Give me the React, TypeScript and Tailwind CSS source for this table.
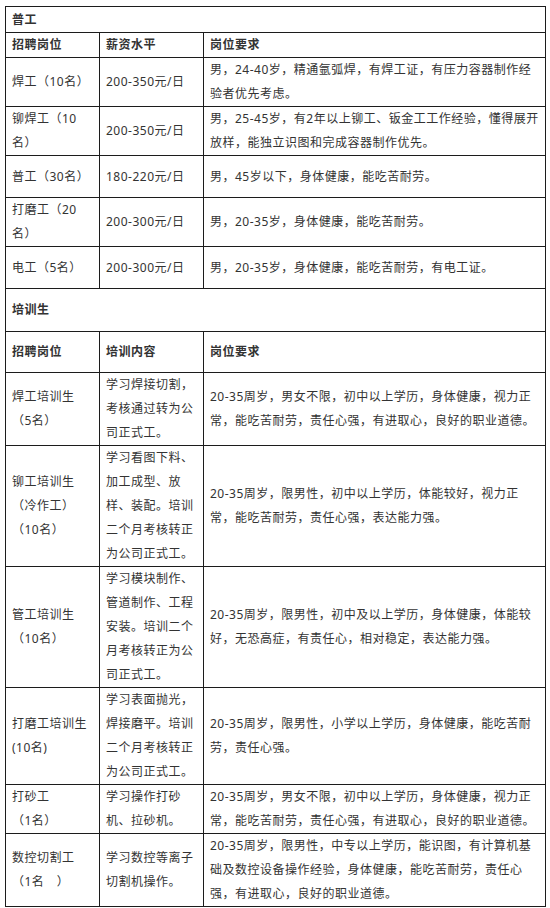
import React from 'react';

type Row = {
    pos: string[];
    mid: string[];
    req: string[];
    h?: string;
};

const workers: Row[] = [
    {
        pos: ['焊工（10名）'],
        mid: ['200-350元/日'],
        req: ['男，24-40岁，精通氩弧焊，有焊工证，有压力容器制作经', '验者优先考虑。'],
    },
    {
        pos: ['铆焊工（10', '名）'],
        mid: ['200-350元/日'],
        req: ['男，25-45岁，有2年以上铆工、钣金工工作经验，懂得展开', '放样，能独立识图和完成容器制作优先。'],
    },
    {
        pos: ['普工（30名）'],
        mid: ['180-220元/日'],
        req: ['男，45岁以下，身体健康，能吃苦耐劳。'],
        h: 'h-[42px]',
    },
    {
        pos: ['打磨工（20', '名）'],
        mid: ['200-300元/日'],
        req: ['男，20-35岁，身体健康，能吃苦耐劳。'],
    },
    {
        pos: ['电工（5名）'],
        mid: ['200-300元/日'],
        req: ['男，20-35岁，身体健康，能吃苦耐劳，有电工证。'],
        h: 'h-[42px]',
    },
];

const trainees: Row[] = [
    {
        pos: ['焊工培训生', '（5名）'],
        mid: ['学习焊接切割，', '考核通过转为公', '司正式工。'],
        req: ['20-35周岁，男女不限，初中以上学历，身体健康，视力正', '常，能吃苦耐劳，责任心强，有进取心，良好的职业道德。'],
    },
    {
        pos: ['铆工培训生', '（冷作工）', '（10名）'],
        mid: ['学习看图下料、', '加工成型、放', '样、装配。培训', '二个月考核转正', '为公司正式工。'],
        req: ['20-35周岁，限男性，初中以上学历，体能较好，视力正', '常，能吃苦耐劳，责任心强，表达能力强。'],
    },
    {
        pos: ['管工培训生', '（10名）'],
        mid: ['学习模块制作、', '管道制作、工程', '安装。培训二个', '月考核转正为公', '司正式工。'],
        req: ['20-35周岁，限男性，初中及以上学历，身体健康，体能较', '好，无恐高症，有责任心，相对稳定，表达能力强。'],
    },
    {
        pos: ['打磨工培训生', '(10名)'],
        mid: ['学习表面抛光，', '焊接磨平。培训', '二个月考核转正', '为公司正式工。'],
        req: ['20-35周岁，限男性，小学以上学历，身体健康，能吃苦耐', '劳，责任心强。'],
    },
    {
        pos: ['打砂工', '（1名）'],
        mid: ['学习操作打砂', '机、拉砂机。'],
        req: ['20-35周岁，男女不限，初中以上学历，身体健康，视力正', '常，能吃苦耐劳，责任心强，有进取心，良好的职业道德。'],
    },
    {
        pos: ['数控切割工', '（1名　）'],
        mid: ['学习数控等离子', '切割机操作。'],
        req: ['20-35周岁，限男性，中专以上学历，能识图，有计算机基', '础及数控设备操作经验，身体健康，能吃苦耐劳，责任心', '强，有进取心，良好的职业道德。'],
    },
];

const cell = 'border border-[#1c1c1c] px-[6px] py-0 align-middle text-left';

const Lines: React.FC<{ lines: string[] }> = ({ lines }) => (
    <>
        {lines.map((l, i) => (
            <div key={i} className="whitespace-nowrap">
                {l}
            </div>
        ))}
    </>
);

const Section: React.FC<{
    title: string;
    midTitle: string;
    rows: Row[];
    titleH: string;
    headH: string;
}> = ({ title, midTitle, rows, titleH, headH }) => (
    <>
        <tr className={titleH}>
            <td colSpan={3} className={`${cell} font-bold`}>
                {title}
            </td>
        </tr>
        <tr className={headH}>
            <td className={`${cell} font-bold`}>招聘岗位</td>
            <td className={`${cell} font-bold`}>{midTitle}</td>
            <td className={`${cell} font-bold`}>岗位要求</td>
        </tr>
        {rows.map((r, i) => (
            <tr key={i} className={r.h}>
                <td className={cell}>
                    <Lines lines={r.pos} />
                </td>
                <td className={cell}>
                    <Lines lines={r.mid} />
                </td>
                <td className={cell}>
                    <Lines lines={r.req} />
                </td>
            </tr>
        ))}
    </>
);

export default function App() {
    return (
        <div
            className="min-h-screen w-[550px] bg-white pt-[6px] pl-[5px] text-[12px] leading-[24px] tracking-[0.5px] text-[#333]"
            style={{ fontFamily: '"Noto Sans", "Noto Sans CJK SC", sans-serif' }}
        >
            <table className="w-[540px] table-fixed border-collapse">
                <colgroup>
                    <col className="w-[94px]" />
                    <col className="w-[104px]" />
                    <col className="w-[342px]" />
                </colgroup>
                <tbody>
                    <Section title="普工" midTitle="薪资水平" rows={workers} titleH="h-[26px]" headH="h-[24px]" />
                    <Section title="培训生" midTitle="培训内容" rows={trainees} titleH="h-[43px]" headH="h-[41px]" />
                </tbody>
            </table>
        </div>
    );
}
